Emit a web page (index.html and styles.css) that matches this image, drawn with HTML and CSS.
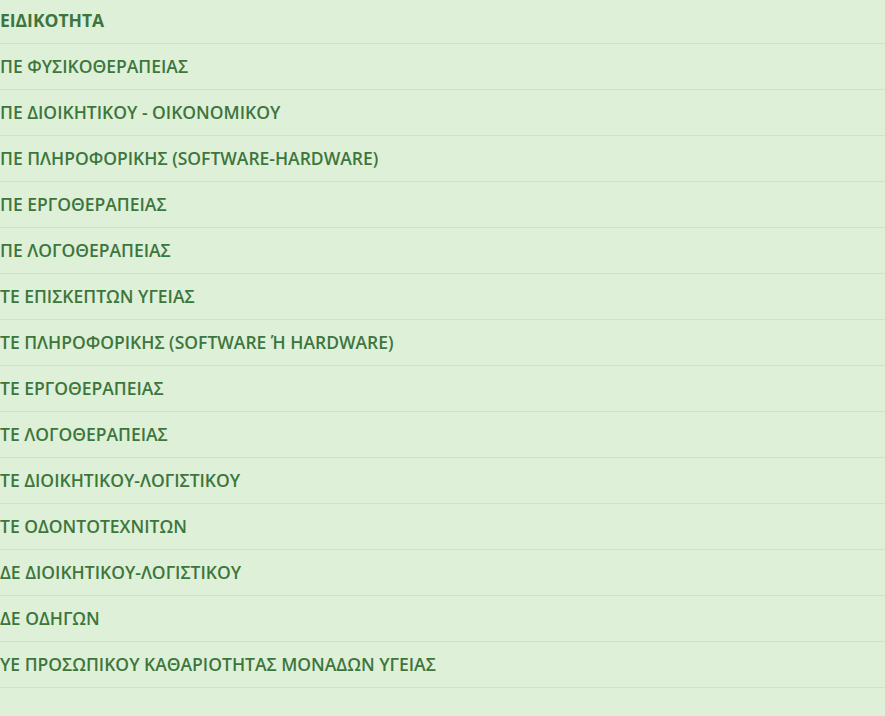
FILE: index.html
```html
<!DOCTYPE html>
<html lang="el">
<head>
<meta charset="utf-8">
<link rel="stylesheet" href="styles.css">
</head>
<body>
<table class="list">
  <thead>
    <tr><th>ΕΙΔΙΚΟΤΗΤΑ</th></tr>
  </thead>
  <tbody>
    <tr><td>ΠΕ ΦΥΣΙΚΟΘΕΡΑΠΕΙΑΣ</td></tr>
    <tr><td>ΠΕ ΔΙΟΙΚΗΤΙΚΟΥ - ΟΙΚΟΝΟΜΙΚΟΥ</td></tr>
    <tr><td>ΠΕ ΠΛΗΡΟΦΟΡΙΚΗΣ (SOFTWARE-HARDWARE)</td></tr>
    <tr><td>ΠΕ ΕΡΓΟΘΕΡΑΠΕΙΑΣ</td></tr>
    <tr><td>ΠΕ ΛΟΓΟΘΕΡΑΠΕΙΑΣ</td></tr>
    <tr><td>ΤΕ ΕΠΙΣΚΕΠΤΩΝ ΥΓΕΙΑΣ</td></tr>
    <tr><td>ΤΕ ΠΛΗΡΟΦΟΡΙΚΗΣ (SOFTWARE Ή HARDWARE)</td></tr>
    <tr><td>ΤΕ ΕΡΓΟΘΕΡΑΠΕΙΑΣ</td></tr>
    <tr><td>ΤΕ ΛΟΓΟΘΕΡΑΠΕΙΑΣ</td></tr>
    <tr><td>ΤΕ ΔΙΟΙΚΗΤΙΚΟΥ-ΛΟΓΙΣΤΙΚΟΥ</td></tr>
    <tr><td>ΤΕ ΟΔΟΝΤΟΤΕΧΝΙΤΩΝ</td></tr>
    <tr><td>ΔΕ ΔΙΟΙΚΗΤΙΚΟΥ-ΛΟΓΙΣΤΙΚΟΥ</td></tr>
    <tr><td>ΔΕ ΟΔΗΓΩΝ</td></tr>
    <tr><td>ΥΕ ΠΡΟΣΩΠΙΚΟΥ ΚΑΘΑΡΙΟΤΗΤΑΣ ΜΟΝΑΔΩΝ ΥΓΕΙΑΣ</td></tr>
  </tbody>
</table>
</body>
</html>
```

FILE: styles.css
```css
html, body {
  margin: 0;
  padding: 0;
  background: #dff0d8;
}
body {
  font-family: "Open Sans", "Noto Sans", sans-serif;
  font-size: 17.5px;
  font-weight: 600;
  color: #3c763d;
}
.list {
  width: 100%;
  border-collapse: collapse;
  margin-top: -2px;
}
.list th,
.list td {
  text-align: left;
  padding: 10px 0 11px;
  line-height: 24px;
  vertical-align: top;
  border-bottom: 1px solid #d6ddd2;
}
.list th {
  font-weight: 700;
}
```
